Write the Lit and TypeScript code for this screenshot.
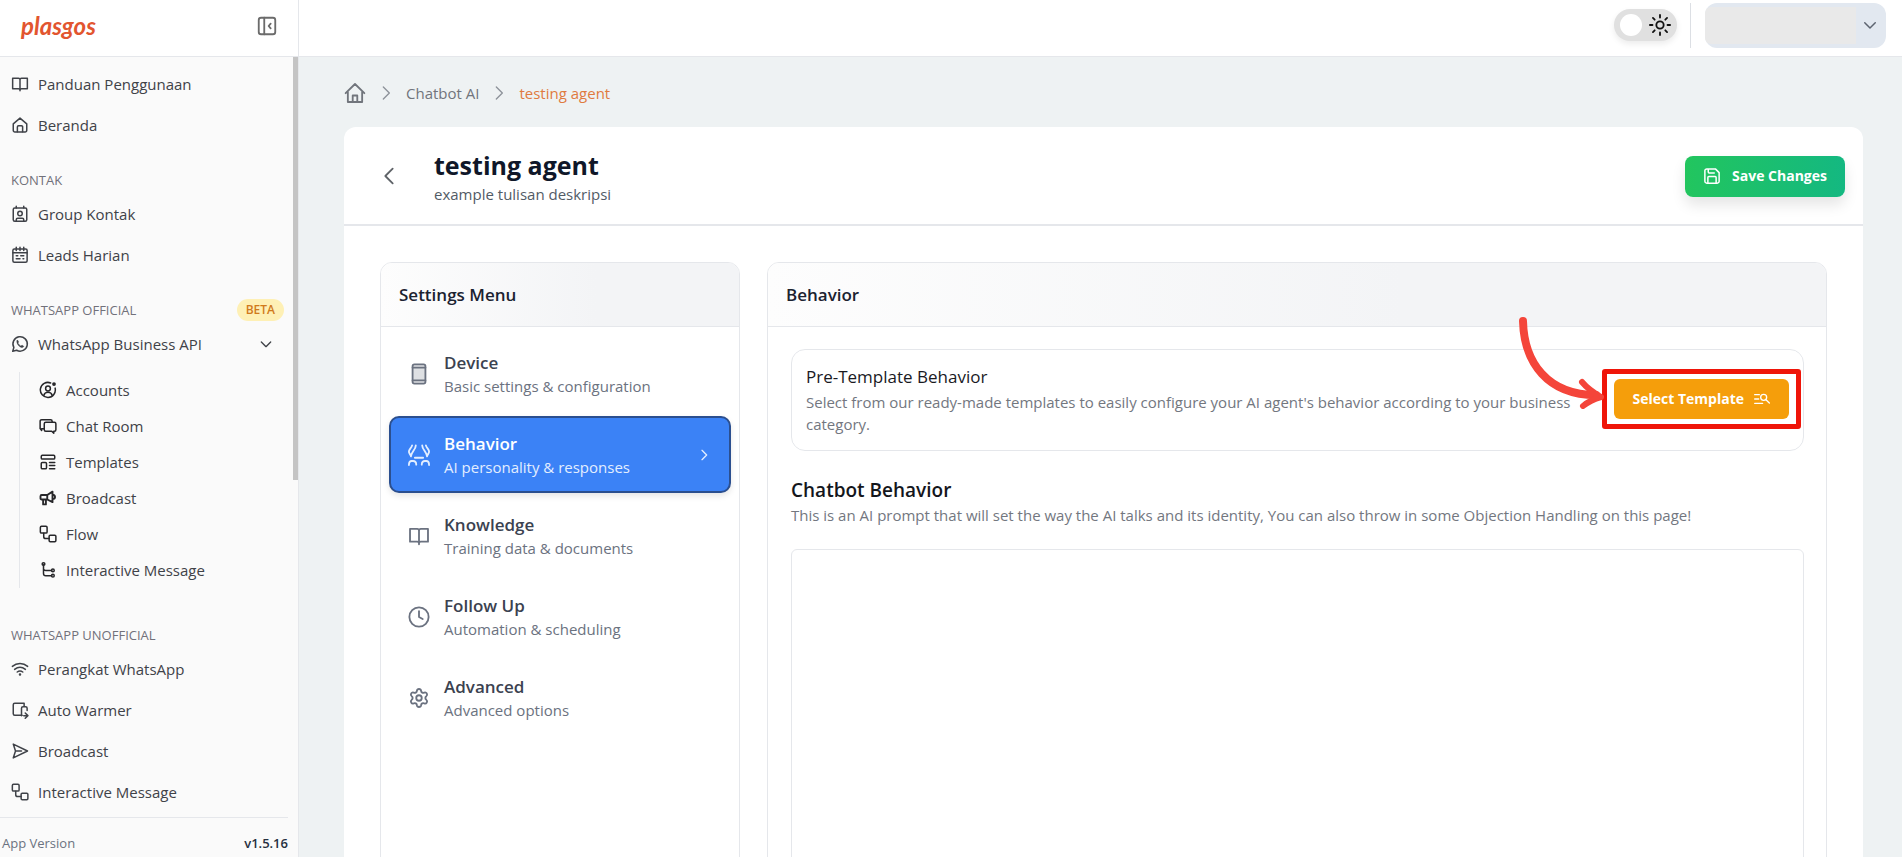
import { LitElement, html, svg, css, nothing } from "lit";
import { customElement, state } from "lit/decorators.js";
import { classMap } from "lit/directives/class-map.js";

/** Line icons on a 24-unit grid, drawn with the current text colour. */
const glyphs = {
  collapse: svg`<rect x="3" y="3" width="18" height="18" rx="2.5"/><path d="M9 3v18M16 9.5 13.8 12l2.200 2.500"/>`,
  book: svg`<path d="M12 6c0-1-.8-1.800-2-1.800H2.200v14H10c1 0 2 .6 2 1.800c0-1.200 1-1.800 2-1.800h7.800v-14H14c-1.200 0-2 .8-2 1.800zM12 6v15"/>`,
  home: svg`<path d="M3 10.500 12 2.800l9 7.700V19a2.200 2.200 0 0 1-2.200 2.200H5.200A2.200 2.200 0 0 1 3 19z"/><path d="M8.500 21v-6.500a1.500 1.500 0 0 1 1.500-1.500h4a1.500 1.500 0 0 1 1.500 1.500V21"/>`,
  homeOutline: svg`<path d="M1.800 12.200 12 2.200l10.200 10M4.200 10.500v11.300h15.600V10.500M9.500 21.500v-6.800h5v6.800"/>`,
  contact: svg`<rect x="3" y="4" width="18" height="17.500" rx="2"/><path d="M7 1.500V4M17 1.500V4M7 21v-1.500a2 2 0 0 1 2-2h6a2 2 0 0 1 2 2V21"/><circle cx="12" cy="11.200" r="3"/>`,
  calendar: svg`<rect x="2.500" y="4" width="19" height="17.500" rx="2"/><path d="M2.500 9h19M7 1.500v4.500M12 1.500v4.500M17 1.500v4.500M13 13h4M7 13h2M7 17h5M16 17h1"/>`,
  whatsapp: svg`<path d="M2.300 21.700l1.500-5.100a9.600 9.600 0 1 1 3.700 3.700z"/><path d="M8 7.500c.8-.8 1.500-.2 2 1.500.3.900-.9 1.300-.6 2 .7 1.500 2 2.800 3.600 3.500.7.300 1.200-1.100 2-.7 1.600.8 2.400 1.200 1.500 2.200-2.600 2.600-10.300-4-8.500-8.500z" fill="currentColor" stroke-width=".6"/>`,
  account: svg`<path d="M15.500 2.600A10 10 0 1 0 21.500 9.500"/><circle cx="12" cy="10" r="3.200"/><path d="M6.500 19c.8-3 3-4 5.500-4s4.700 1 5.500 4"/><circle cx="20" cy="4" r="1.500" fill="currentColor"/>`,
  chat: svg`<path d="M7 15.500H3.500V18l-2-2.500V5.500a2 2 0 0 1 2-2h12a2 2 0 0 1 2 2V7"/><path d="M9 7h11.500a2 2 0 0 1 2 2v8a2 2 0 0 1-2 2h-.8v2.500L17 19H9a2 2 0 0 1-2-2V9a2 2 0 0 1 2-2z"/>`,
  template: svg`<rect x="3" y="3" width="18" height="5" rx="1.500"/><rect x="3" y="12.500" width="7" height="8.500" rx="1.500"/><path d="M14 12.500h7M14 16.800h7M14 21h7"/>`,
  megaphone: svg`<path d="M3.500 8H11l7-4.500v14L11 14H3.500a1.500 1.500 0 0 1-1.500-1.500v-3A1.500 1.500 0 0 1 3.500 8zM11 8v6M5.500 14v6.500h3.700V14M18 7.500c4.500.5 4.500 5.500 0 6" stroke-width="2.500"/>`,
  flow: svg`<rect x="1.800" y="1.800" width="9" height="9" rx="1.500"/><rect x="13.500" y="13.500" width="9" height="8.700" rx="1.500"/><path d="M6.300 11v4.500a2.500 2.500 0 0 0 2.500 2.500h4.700"/>`,
  tree: svg`<path d="M6 5v11.500a3 3 0 0 0 3 3h8M6 10.500a3 3 0 0 0 3 2h8"/><circle cx="6" cy="4" r="1.800"/><circle cx="18.500" cy="12.500" r="1.800"/><circle cx="18.500" cy="19.500" r="1.800"/>`,
  wifi: svg`<path d="M1.800 8.500c6-5.300 14.400-5.300 20.400 0M4.800 12.500c4.500-3.700 9.900-3.700 14.400 0M8.300 16c2.500-1.800 4.900-1.800 7.400 0"/><circle cx="12" cy="19.300" r=".7" fill="currentColor"/>`,
  warmer: svg`<path d="M11 19H5a2 2 0 0 1-2-2V5a2 2 0 0 1 2-2h12.500v4M14 19.500V9.500a2 2 0 0 1 2-2h3.500a2 2 0 0 1 2 2v3M17 19.500h4M19 16l3.500 3.500L19 23M11 19h4"/>`,
  send: svg`<path d="M3 2.800 22 12 3 21.200l3-9.200zM6 12h8"/>`,
  down: svg`<path d="m5 9 7 7 7-7"/>`,
  right: svg`<path d="m9 5 7 7-7 7"/>`,
  crumb: svg`<path d="m8 3 9 9-9 9"/>`,
  left: svg`<path d="m16 4-8 8 8 8"/>`,
  sun: svg`<circle cx="12" cy="12" r="4"/><path d="M12 1v2.800M12 20.200V23M1 12h2.800M20.200 12H23M4.300 4.300l1.900 1.900M17.800 17.800l1.900 1.900M4.300 19.700l1.900-1.900M17.800 6.200l1.900-1.900"/>`,
  save: svg`<path d="M16.500 2.500H5A2.500 2.500 0 0 0 2.500 5v14A2.500 2.500 0 0 0 5 21.500h14a2.500 2.500 0 0 0 2.500-2.500V7.500zM6.500 21v-7a1.200 1.200 0 0 1 1.200-1.200h8.600a1.200 1.200 0 0 1 1.200 1.200v7M7 3v3.800A1.200 1.200 0 0 0 8.200 8H15"/>`,
  listSearch: svg`<path d="M1 5.500h7M1 12h6M1 18.500h12"/><circle cx="14.500" cy="9.500" r="4.500"/><path d="m18 13 5 5"/>`,
  device: svg`<rect x="5" y="1.500" width="14" height="21" rx="2" fill="currentColor" fill-opacity=".22"/><path d="M5 5h14M5 19h14"/>`,
  behavior: svg`<path d="M4.500 1.500C3.800 4.500 1 5.500 1 8.500c0 2 2 3 2.200 5M8.500 1.500C8.500 6 3.500 8.500 3.200 13.500M19.500 1.500c.7 3 3.500 4 3.500 7 0 2-2 3-2.200 5M15.500 1.500c0 4.500 5 7 5.300 12M7.500 15h9M1 23c0-3.500 1-4.500 3-4.500h1.500c2 0 3.500 1 3.500 4M15 22.500c0-3 1.500-4 3.500-4H20c2 0 3 1 3 4.500"/>`,
  clock: svg`<circle cx="12" cy="12" r="10.500"/><path d="M12 5.500V12l4 2.200"/>`,
  gear: svg`<path d="M9.700 4.200c.4-2.700 4.200-2.700 4.600 0a2.300 2.300 0 0 0 3.400 1.900c2.400-1 4.300 2.200 2.300 3.900a2.400 2.400 0 0 0 0 4c2 1.700.1 4.900-2.300 3.900a2.300 2.300 0 0 0-3.400 1.900c-.4 2.700-4.200 2.700-4.600 0a2.300 2.300 0 0 0-3.400-1.900c-2.400 1-4.300-2.200-2.300-3.900a2.400 2.400 0 0 0 0-4c-2-1.700-.1-4.900 2.300-3.900a2.300 2.300 0 0 0 3.400-1.900z"/><circle cx="12" cy="12" r="3"/>`,
};
type Glyph = keyof typeof glyphs;

const icon = (name: Glyph, size = "md") =>
  html`<svg class="icon ${size}" viewBox="0 0 24 24" aria-hidden="true">${glyphs[name]}</svg>`;

type Link = { icon: Glyph; label: string };

const mainLinks: Link[] = [
  { icon: "book", label: "Panduan Penggunaan" },
  { icon: "home", label: "Beranda" },
];
const contactLinks: Link[] = [
  { icon: "contact", label: "Group Kontak" },
  { icon: "calendar", label: "Leads Harian" },
];
const officialLinks: Link[] = [
  { icon: "account", label: "Accounts" },
  { icon: "chat", label: "Chat Room" },
  { icon: "template", label: "Templates" },
  { icon: "megaphone", label: "Broadcast" },
  { icon: "flow", label: "Flow" },
  { icon: "tree", label: "Interactive Message" },
];
const unofficialLinks: Link[] = [
  { icon: "wifi", label: "Perangkat WhatsApp" },
  { icon: "warmer", label: "Auto Warmer" },
  { icon: "send", label: "Broadcast" },
  { icon: "flow", label: "Interactive Message" },
];
const settings = [
  { icon: "device" as Glyph, title: "Device", note: "Basic settings & configuration" },
  { icon: "behavior" as Glyph, title: "Behavior", note: "AI personality & responses" },
  { icon: "book" as Glyph, title: "Knowledge", note: "Training data & documents" },
  { icon: "clock" as Glyph, title: "Follow Up", note: "Automation & scheduling" },
  { icon: "gear" as Glyph, title: "Advanced", note: "Advanced options" },
];

@customElement("app-root")
export class AppRoot extends LitElement {
  @state() private active = "Behavior";
  @state() private expanded = true;

  static styles = css`
    :host {
      display: grid;
      grid-template-columns: 299px minmax(0, 1fr);
      height: 100vh;
      overflow: hidden;
      background: #eef2f3;
      color: #3f4248;
      font: 15px/22px "Open Sans", "Noto Sans", sans-serif;
    }
    *, *::before { box-sizing: border-box; }
    h1, h2, h3, p, ul, ol { margin: 0; padding: 0; }
    ul, ol { list-style: none; }
    a { color: inherit; text-decoration: none; }
    button { font: inherit; color: inherit; border: 0; background: none; padding: 0; cursor: pointer; }
    .icon { fill: none; stroke: currentColor; stroke-width: 2; stroke-linecap: round; stroke-linejoin: round; flex: none; display: block; }
    .sm { width: 16px; height: 16px; }
    .md { width: 18px; height: 18px; }
    .lg { width: 22px; height: 22px; }

    .sidebar { display: flex; flex-direction: column; min-height: 0; background: #fafafa; border-right: 1px solid #e5e7eb; }
    .brand { display: flex; align-items: center; justify-content: space-between; flex: none; height: 57px; padding: 0 20px 4px 21px; background: #fff; border-bottom: 1px solid #e5e7eb; }
    .logo { font: italic 700 24px/32px Lato, "Open Sans", sans-serif; color: #e2552f; }
    .collapse { color: #6b6b6b; }
    .scroll { position: relative; flex: 1; min-height: 0; overflow: hidden; padding-top: 6px; }
    .thumb { position: absolute; top: 0; right: 0; width: 5px; height: 423px; background: #c4c4c4; }
    .link { display: flex; align-items: center; gap: 9px; width: 100%; height: 41px; padding: 0 24px 0 11px; text-align: left; }
    .link .label { flex: 1; }
    .section { display: flex; align-items: center; justify-content: space-between; height: 20px; margin: 25px 14px 3px 11px; font-size: 13px; color: #71717a; font-weight: 400; }
    .badge { padding: 0 9px; border-radius: 11px; background: #fef0b5; color: #d07a1c; font-size: 12px; font-weight: 600; }
    .sub { margin: 8px 0 0 19px; border-left: 1px solid #e5e7eb; }
    .sub + .section { margin-top: 37px; }
    .sub .link { height: 36px; padding-left: 19px; }
    .sub .icon { color: #27272a; }
    .version { display: flex; justify-content: space-between; flex: none; margin-right: 10px; padding: 15px 0 4px 2px; border-top: 1px solid #e5e7eb; font-size: 13px; line-height: 20px; color: #6b7280; }
    .version strong { font-weight: 600; color: #27303f; }

    .page { display: flex; flex-direction: column; min-width: 0; min-height: 0; }
    .topbar { display: flex; align-items: center; justify-content: flex-end; flex: none; height: 57px; padding: 0 16px 6px; background: #fff; border-bottom: 1px solid #e5e7eb; }
    .theme { display: flex; align-items: center; justify-content: space-between; width: 63px; height: 32px; padding: 0 6px; border-radius: 16px; background: #e0e0e0; box-shadow: 0 3px 6px #00000014; color: #111; cursor: pointer; }
    .theme input { appearance: none; width: 22px; height: 22px; margin: 0; border-radius: 50%; background: #fff; cursor: pointer; }
    .rule { width: 1px; height: 45px; margin: 0 14px 0 13px; background: #dcdfe4; }
    .profile { display: flex; align-items: center; width: 181px; height: 45px; padding-right: 7px; border-radius: 12px; background: #e2e8f0; color: #5d6470; }
    .name { flex: 1; height: 37px; margin-right: 5px; border-radius: 6px 0 0 6px; background: #e9e9e9; }

    .content { display: flex; flex-direction: column; flex: 1; min-height: 0; overflow: hidden; padding: 26px 39px 0 45px; }
    .crumbs { display: flex; align-items: center; gap: 12px; height: 20px; margin-bottom: 24px; color: #71757c; }
    .crumbs .sm { color: #8d9299; }
    .crumbs .current { color: #e07a3f; }
    .card { flex: none; min-height: 900px; background: #fff; border-radius: 12px; }
    .head { display: flex; align-items: center; gap: 25px; padding: 20px 18px 19px 25px; border-bottom: 2px solid #e5e7eb; }
    .back { display: grid; place-items: center; width: 40px; height: 40px; color: #5f6368; }
    .titles { flex: 1; }
    h1 { font-size: 25px; line-height: 36px; font-weight: 700; color: #0f1729; }
    .titles p { color: #525b66; }
    .save { display: flex; align-items: center; gap: 11px; height: 41px; padding: 0 18px; border-radius: 8px; background: linear-gradient(90deg, #22c55e, #14b881); box-shadow: 0 8px 14px #0000001a; color: #fff; font-size: 14px; font-weight: 700; }
    .body { display: grid; grid-template-columns: 360px minmax(0, 1fr); gap: 27px; padding: 36px 36px 0; }
    .panel { min-height: 640px; border: 1px solid #e5e7eb; border-radius: 12px; overflow: hidden; }
    h2 { padding: 20px 18px 19px; font-size: 17px; line-height: 24px; font-weight: 600; color: #1b2230; background: linear-gradient(90deg, #fdfdfd, #f3f4f6 60%); border-bottom: 1px solid #e5e7eb; }
    .menu { display: grid; gap: 4px; padding: 8px; }
    .item { display: flex; align-items: center; gap: 14px; width: 100%; height: 77px; padding: 0 17px; border: 2px solid transparent; border-radius: 10px; text-align: left; color: #6b7280; }
    .item .label { flex: 1; }
    .item strong { display: block; font-size: 17px; line-height: 25px; font-weight: 600; color: #3b4250; }
    .item.on { background: #3b82f6; border-color: #2b4f8f; box-shadow: 0 3px 6px #0000001a; color: #e3eeff; }
    .item.on strong { color: #fff; }
    .form { padding: 22px 22px 22px 23px; }
    .preset { display: flex; align-items: center; gap: 32px; padding: 13px 14px 15px; border: 1px solid #e5e7eb; border-radius: 14px; color: #73777f; }
    .preset .copy { flex: 1; }
    .preset h3 { font-size: 17px; line-height: 28px; font-weight: 400; color: #1a1a1f; }
    .pick { position: relative; flex: none; }
    .select { display: flex; align-items: center; gap: 10px; height: 40px; padding: 0 19px 0 18px; border-radius: 6px; background: #f59e0b; color: #fff; font-size: 14px; font-weight: 700; }
    .outline { position: absolute; inset: -10px -12px; border: 5px solid #ef1509; border-radius: 3px; pointer-events: none; }
    .arrow { position: absolute; right: 100%; bottom: 10px; width: 100px; height: 96px; margin-right: 10px; pointer-events: none; fill: none; stroke: #f4453a; stroke-linecap: round; stroke-linejoin: round; }
    .field { display: block; margin-top: 25px; font-size: 19px; line-height: 28px; font-weight: 600; color: #14161c; }
    .hint { color: #73777f; }
    textarea { display: block; width: 100%; height: 480px; margin-top: 23px; padding: 12px; border: 1px solid #e5e7eb; border-radius: 6px; background: #fff; font: inherit; resize: none; }
  `;

  private links(items: Link[], size = "md") {
    return html`<ul>${items.map((l) => html`<li><a class="link" href="#">${icon(l.icon, size)}<span class="label">${l.label}</span></a></li>`)}</ul>`;
  }

  render() {
    return html`
      <aside class="sidebar">
        <div class="brand">
          <a class="logo" href="#">plasgos</a>
          <button class="collapse" aria-label="Collapse sidebar">${icon("collapse", "lg")}</button>
        </div>
        <nav class="scroll">
          ${this.links(mainLinks)}
          <h3 class="section">KONTAK</h3>
          ${this.links(contactLinks)}
          <h3 class="section">WHATSAPP OFFICIAL <span class="badge">BETA</span></h3>
          <button class="link" aria-expanded=${this.expanded} @click=${() => (this.expanded = !this.expanded)}>
            ${icon("whatsapp")}<span class="label">WhatsApp Business API</span>${icon("down", "sm")}
          </button>
          ${this.expanded ? html`<div class="sub">${this.links(officialLinks)}</div>` : nothing}
          <h3 class="section">WHATSAPP UNOFFICIAL</h3>
          ${this.links(unofficialLinks)}
          <div class="thumb"></div>
        </nav>
        <div class="version"><span>App Version</span><strong>v1.5.16</strong></div>
      </aside>
      <div class="page">
        <header class="topbar">
          <label class="theme"><input type="checkbox" role="switch" aria-label="Dark mode">${icon("sun", "lg")}</label>
          <div class="rule"></div>
          <button class="profile" aria-label="Account menu"><span class="name"></span>${icon("down", "md")}</button>
        </header>
        <main class="content">
          <nav class="crumbs" aria-label="Breadcrumb">
            <a href="#" aria-label="Home">${icon("homeOutline", "lg")}</a>
            ${icon("crumb", "sm")}<a href="#">Chatbot AI</a>${icon("crumb", "sm")}<span class="current">testing agent</span>
          </nav>
          <section class="card">
            <div class="head">
              <button class="back" aria-label="Back">${icon("left", "lg")}</button>
              <div class="titles"><h1>testing agent</h1><p>example tulisan deskripsi</p></div>
              <button class="save">${icon("save")}Save Changes</button>
            </div>
            <div class="body">
              <section class="panel">
                <h2>Settings Menu</h2>
                <div class="menu">
                  ${settings.map((s) => html`
                    <button class=${classMap({ item: true, on: s.title === this.active })} @click=${() => (this.active = s.title)}>
                      ${icon(s.icon, "lg")}
                      <span class="label"><strong>${s.title}</strong>${s.note}</span>
                      ${s.title === this.active ? icon("right", "sm") : nothing}
                    </button>`)}
                </div>
              </section>
              <section class="panel">
                <h2>${this.active}</h2>
                <div class="form">
                  <div class="preset">
                    <div class="copy">
                      <h3>Pre-Template Behavior</h3>
                      <p>Select from our ready-made templates to easily configure your AI agent's behavior according to your business category.</p>
                    </div>
                    <div class="pick">
                      <button class="select">Select Template ${icon("listSearch", "sm")}</button>
                      <div class="outline"></div>
                      <svg class="arrow" viewBox="0 0 100 96" aria-hidden="true">
                        <path stroke-width="8" d="M19 8C20 50 44 82 92 82"/>
                        <path stroke-width="6" d="M78 69C83 75 90 80 97 84C90 86 84 89 79 93"/>
                      </svg>
                    </div>
                  </div>
                  <label class="field" for="prompt">Chatbot Behavior</label>
                  <p class="hint">This is an AI prompt that will set the way the AI talks and its identity, You can also throw in some Objection Handling on this page!</p>
                  <textarea id="prompt"></textarea>
                </div>
              </section>
            </div>
          </section>
        </main>
      </div>
    `;
  }
}
